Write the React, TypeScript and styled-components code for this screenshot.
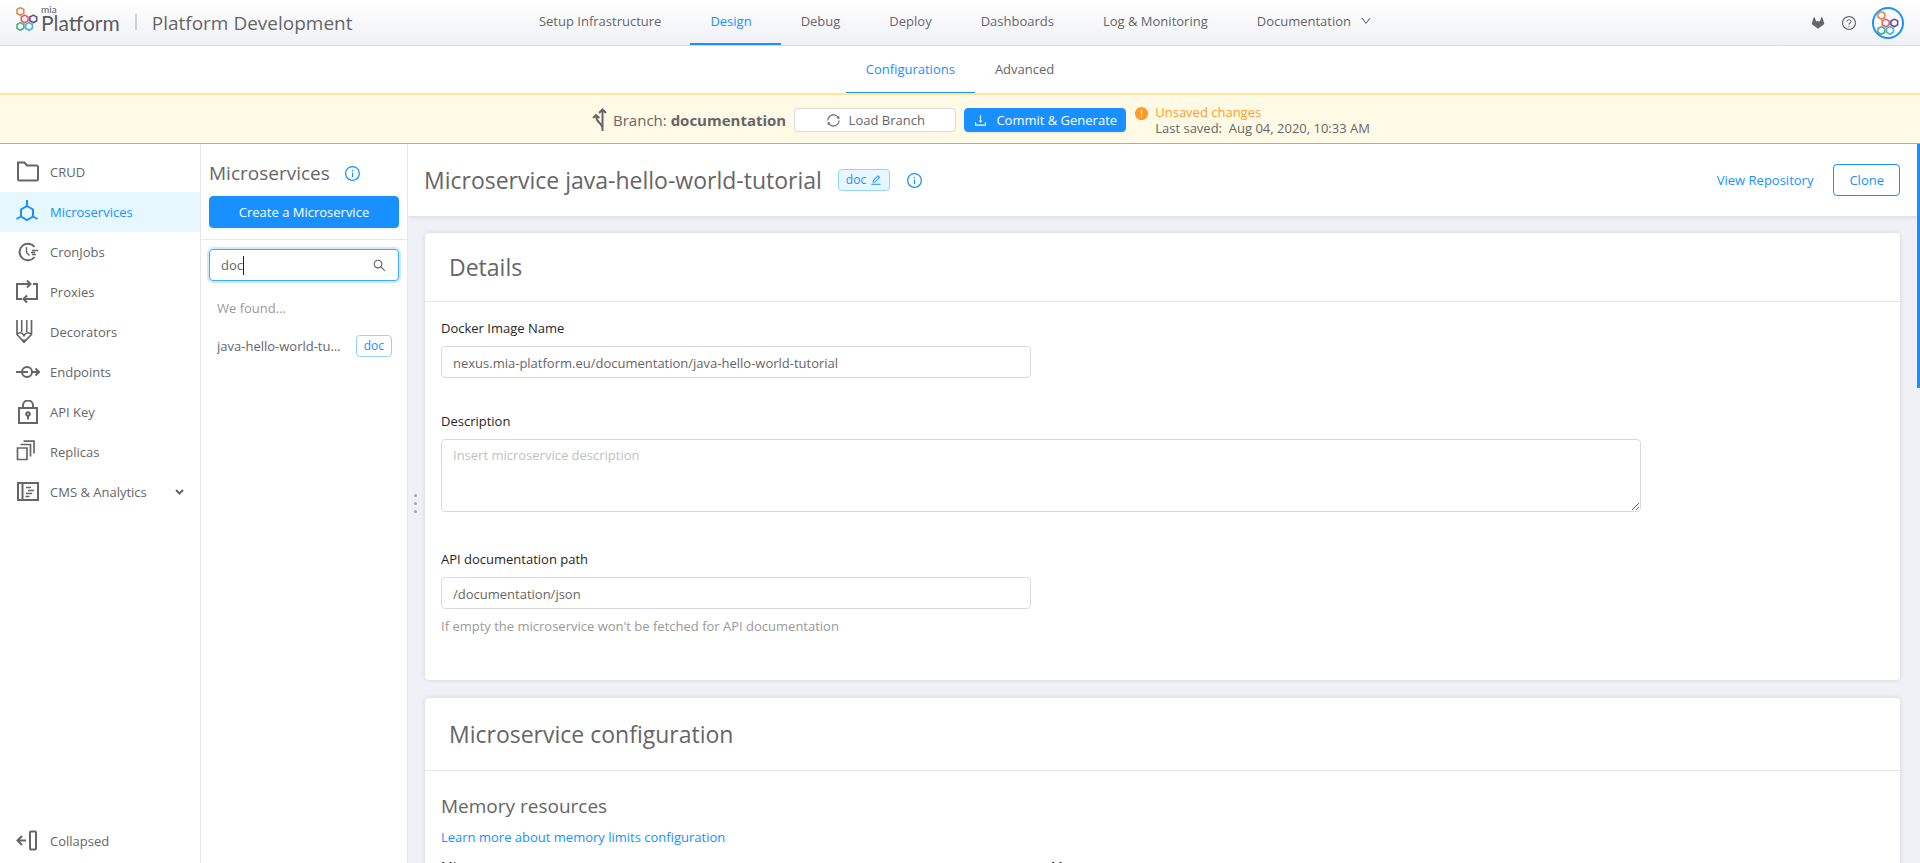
import React, { useState } from "react";
import styled, { createGlobalStyle, css } from "styled-components";
import {
  AiFillExclamationCircle,
  AiFillGitlab,
  AiOutlineDown,
  AiOutlineDownload,
  AiOutlineEdit,
  AiOutlineInfoCircle,
  AiOutlineQuestionCircle,
  AiOutlineSearch,
  AiOutlineSync,
} from "react-icons/ai";

const BLUE = "#1890ff";
const TEXT = "#666666";
const LINE = "#e8e8e8";
const ORANGE = "#ff9a2e";
const CANVAS = "#f0f1f6";

const GlobalStyle = createGlobalStyle`
  *, *::before, *::after { box-sizing: border-box; }
  body {
    margin: 0;
    font-family: "Open Sans", "Noto Sans", sans-serif;
    font-size: 13px;
    line-height: 22px;
    color: ${TEXT};
    background: #fff;
  }
  button, input, textarea { font: inherit; color: inherit; }
  a { color: ${BLUE}; text-decoration: none; }
  h1, h2, h3, p, ul { margin: 0; padding: 0; font-weight: 400; list-style: none; }
`;

const Page = styled.div`
  height: 100vh;
  display: flex;
  flex-direction: column;
  overflow: hidden;
`;

/* ---------- top bar ---------- */

const TopBar = styled.header`
  flex: none;
  height: 46px;
  display: grid;
  grid-template-columns: 1fr auto 1fr;
  background: linear-gradient(#fff, ${CANVAS});
  border-bottom: 1px solid #d9d9dc;
`;

const Brand = styled.div`
  display: flex;
  align-items: center;
  padding: 0 0 8px 16px;
`;

const BrandName = styled.span`
  display: flex;
  flex-direction: column;
  margin-left: 3px;
  font-family: Lato, sans-serif;
  font-size: 21px;
  line-height: 20px;
  color: #5b5c5e;

  small {
    font-size: 10px;
    line-height: 8px;
  }
`;

const Divider = styled.span`
  width: 2px;
  height: 16px;
  margin: 6px 15px 0;
  background: #d0d0d3;
`;

const ProjectName = styled.span`
  margin-top: 8px;
  font-size: 19px;
  line-height: 28px;
`;

const Nav = styled.nav`
  display: flex;
`;

const NavLink = styled.a<{ $active?: boolean }>`
  display: flex;
  align-items: center;
  gap: 9px;
  padding: 0 29px 2px 20px;
  color: ${(p) => (p.$active ? BLUE : TEXT)};
  border-bottom: 2px solid ${(p) => (p.$active ? BLUE : "transparent")};
`;

const TopActions = styled.div`
  display: flex;
  align-items: center;
  justify-content: flex-end;
  gap: 15px;
  padding-right: 16px;
`;

const IconButton = styled.button`
  display: flex;
  padding: 0;
  border: 0;
  background: none;
`;

const Avatar = styled.button`
  display: flex;
  align-items: center;
  justify-content: center;
  width: 32px;
  height: 32px;
  padding: 0;
  border: 2px solid ${BLUE};
  border-radius: 50%;
  background: #fff;
`;

/* ---------- section tabs ---------- */

const SubNav = styled.nav`
  flex: none;
  height: 48px;
  display: flex;
  justify-content: center;
  border-bottom: 1px solid ${LINE};
`;

const SubLink = styled.a<{ $active?: boolean }>`
  display: flex;
  align-items: center;
  padding: 0 20px;
  color: ${(p) => (p.$active ? BLUE : TEXT)};
  border-bottom: 1px solid ${(p) => (p.$active ? BLUE : "transparent")};
`;

/* ---------- branch banner ---------- */

const Banner = styled.section`
  flex: none;
  height: 50px;
  display: flex;
  align-items: center;
  justify-content: center;
  gap: 8px;
  padding: 2px 0 0 42px;
  background: #fffae6;
  border-top: 1px solid #ffe58f;
  border-bottom: 1px solid ${ORANGE};
`;

const BranchLabel = styled.div`
  display: flex;
  align-items: center;
  gap: 6px;
  font-size: 15px;
`;

const Button = styled.button<{ $primary?: boolean; $outline?: boolean; $small?: boolean }>`
  display: flex;
  align-items: center;
  justify-content: center;
  gap: 8px;
  height: ${(p) => (p.$small ? 24 : 32)}px;
  padding: 0 15px;
  border: 1px solid #d9d9d9;
  border-radius: 4px;
  background: #fff;
  ${(p) => p.$small && css`width: 162px; padding: 0;`}
  ${(p) =>
    p.$primary &&
    css`
      color: #fff;
      background: ${BLUE};
      border-color: ${BLUE};
      box-shadow: 0 2px 0 rgba(0, 0, 0, 0.04);
    `}
  ${(p) =>
    p.$outline &&
    css`
      color: ${BLUE};
      border-color: ${BLUE};
    `}
`;

const SaveState = styled.div`
  display: flex;
  gap: 6px;
  line-height: 16px;

  svg { margin-top: 2px; color: ${ORANGE}; }
  strong { display: block; font-weight: 400; color: ${ORANGE}; }
  span { white-space: pre; }
`;

/* ---------- body ---------- */

const Body = styled.div`
  flex: 1;
  min-height: 0;
  display: flex;
`;

const Sidebar = styled.nav`
  flex: none;
  width: 201px;
  display: flex;
  flex-direction: column;
  justify-content: space-between;
  padding: 8px 0 2px;
  border-right: 1px solid ${LINE};
`;

const SideItem = styled.a<{ $active?: boolean }>`
  display: flex;
  align-items: center;
  gap: 10px;
  height: 40px;
  padding: 0 16px;
  color: ${(p) => (p.$active ? BLUE : TEXT)};
  background: ${(p) => (p.$active ? "#e6f7ff" : "transparent")};

  > span { flex: 1; }
`;

const Panel = styled.aside`
  flex: none;
  width: 207px;
  border-right: 1px solid ${LINE};
`;

const PanelHead = styled.div`
  display: flex;
  flex-direction: column;
  gap: 8px;
  padding: 14px 8px 11px;
  border-bottom: 1px solid ${LINE};
`;

const PanelTitle = styled.div`
  display: flex;
  align-items: center;
  gap: 14px;

  h2 { font-size: 19px; line-height: 30px; }
  svg { color: ${BLUE}; }
`;

const SearchBox = styled.label`
  position: relative;
  display: flex;
  align-items: center;
  height: 32px;
  margin: 9px 8px 0;
  padding: 0 11px;
  border: 1px solid #40a9ff;
  border-radius: 4px;
  box-shadow: 0 0 0 2px rgba(24, 144, 255, 0.2);

  input {
    flex: 1;
    min-width: 0;
    padding: 0;
    border: 0;
    outline: 0;
    background: none;
    caret-color: transparent;
  }
`;

const Caret = styled.i`
  position: absolute;
  left: 33px;
  top: 6px;
  width: 1px;
  height: 19px;
  background: #222;
`;

const ResultsTitle = styled.p`
  padding: 16px 16px 0;
  color: #999;
`;

const Result = styled.a`
  display: flex;
  align-items: center;
  gap: 12px;
  margin: 16px 15px 0 16px;
  color: ${TEXT};

  > span:first-child {
    flex: 1;
    min-width: 0;
    overflow: hidden;
    text-overflow: ellipsis;
    white-space: nowrap;
  }
`;

const tag = css`
  display: flex;
  align-items: center;
  gap: 4px;
  height: 22px;
  padding: 0 7px;
  border: 1px solid #91d5ff;
  border-radius: 4px;
  font-size: 12px;
  line-height: 20px;
  color: ${BLUE};
`;

const Tag = styled.span`
  ${tag}
`;

const TagButton = styled.button`
  ${tag}
  background: #e6f7ff;
`;

const Main = styled.main`
  position: relative;
  flex: 1;
  min-width: 0;
  overflow: hidden;
  background: ${CANVAS};
`;

const MainHead = styled.div`
  display: flex;
  align-items: center;
  gap: 16px;
  height: 72px;
  padding: 0 20px 0 16px;
  background: #fff;
  box-shadow: 0 1px 4px rgba(0, 0, 0, 0.1);

  h1 { font-size: 23px; line-height: 32px; }
  > svg { color: ${BLUE}; }
  > a { margin-left: auto; margin-right: 4px; }
`;

const Cards = styled.div`
  display: flex;
  flex-direction: column;
  gap: 18px;
  padding: 17px 20px 17px 17px;
`;

const Card = styled.section`
  background: #fff;
  border-radius: 4px;
  box-shadow: 0 0 5px rgba(0, 0, 0, 0.12);
`;

const CardTitle = styled.h2<{ $tall?: boolean }>`
  padding: ${(p) => (p.$tall ? 20 : 18)}px 24px;
  font-size: 23px;
  line-height: 32px;
  border-bottom: 1px solid ${LINE};
`;

const CardBody = styled.div`
  padding: 15px 16px 11px;
`;

const FieldGrid = styled.div`
  display: grid;
  grid-template-columns: 1fr 1fr;
  column-gap: 20px;
  max-width: 1200px;
`;

const Field = styled.div<{ $wide?: boolean }>`
  grid-column: ${(p) => (p.$wide ? "1 / -1" : "1")};
  display: flex;
  flex-direction: column;
  margin-bottom: 32px;

  label { margin-bottom: 7px; color: #262626; }
  small { margin-top: 6px; font-size: 13px; color: #999; }
`;

const control = css`
  border: 1px solid #d9d9d9;
  border-radius: 4px;
  background: #fff;
  outline: 0;
`;

const TextInput = styled.input`
  ${control}
  height: 32px;
  padding: 5px 11px 3px;
`;

const TextArea = styled.textarea`
  ${control}
  height: 73px;
  margin-bottom: 4px;
  padding: 4px 11px;
  resize: vertical;

  &::placeholder { color: #bfbfbf; }
`;

const SubTitle = styled.h3`
  margin: 5px 0;
  font-size: 19px;
  line-height: 30px;
`;

const LimitGrid = styled(FieldGrid)`
  margin-top: 7px;

  ${Field} { grid-column: auto; }
`;

const Grip = styled.div`
  position: absolute;
  left: 6px;
  top: 0;
  bottom: 0;
  display: flex;
  flex-direction: column;
  justify-content: center;
  gap: 5px;

  i {
    width: 3px;
    height: 3px;
    border-radius: 50%;
    background: #a6a6a6;
  }
`;

const ScrollThumb = styled.div`
  position: absolute;
  top: 0;
  right: 0;
  width: 3px;
  height: 34%;
  background: ${BLUE};
`;

/* ---------- drawings ---------- */

const HEXES: [number, number, string][] = [
  [4.4, 4.4, "#e8884a"],
  [8.7, 11.9, "#e4606c"],
  [17.3, 11.9, "#6a4c93"],
  [4.4, 19.4, "#4fae7b"],
  [13, 19.4, "#45b5da"],
];

const HexLogo = () => (
  <svg width="22" height="24" viewBox="0 0 22 24" fill="none" strokeWidth="1.6" aria-hidden="true">
    {HEXES.map(([x, y, color]) => (
      <path
        key={color}
        stroke={color}
        strokeLinejoin="round"
        d={`M${x} ${y - 3.8}l3.400 1.900v3.800l-3.400 1.900-3.400-1.900v-3.800z`}
      />
    ))}
  </svg>
);

const Glyph = ({ children }: { children: React.ReactNode }) => (
  <svg width="24" height="24" viewBox="0 0 24 24" fill="none" stroke="currentColor" strokeWidth="2" aria-hidden="true">
    {children}
  </svg>
);

const BranchIcon = () => (
  <svg width="15" height="24" viewBox="0 0 15 24" fill="none" stroke="currentColor" strokeWidth="2" aria-hidden="true">
    <path d="M10.500 23V2M7 5l3.500-3.500L14 5M10 19C9 14 4 15 4 7M1 10l3-3 3.500 3" />
  </svg>
);

const ICONS: Record<string, React.ReactNode> = {
  crud: <path d="M2 2.500h6.500l2.500 3h9.500a1.500 1.500 0 0 1 1.500 1.500v12a1.500 1.500 0 0 1-1.500 1.500h-17A1.500 1.500 0 0 1 2 19z" />,
  services: (
    <path d="M11 0v6M11 6l6 3.500v7L11 20l-6-3.500v-7zM5 16.500L.5 19M17 16.500l4.500 2.500" />
  ),
  cron: (
    <>
      <path d="M18.500 7A8.300 8.300 0 1 0 18.500 17" />
      <path d="M10.500 7v5.500l3 3M16 10.500h6M15 12.500h4M16 14.500h4" strokeWidth="1.400" />
    </>
  ),
  proxies: (
    <path d="M6 19H1V4h13M17 4h4v15H8M11 .5L14.500 4 11 7.500M11 15.500l-3.500 3.500 3.500 3.500" />
  ),
  decorators: (
    <>
      <path d="M1 0v14.500L8 22l7.500-7.500V0M1 14.500c2-2.500 5-2.500 7 1 2-3.500 5-3.500 7.500-1" strokeWidth="1.700" />
      <path d="M5.700 0v12M10.800 0v12" strokeWidth="1.500" />
      <path d="M6 20l2 3 2-3z" fill="currentColor" strokeWidth="1" />
    </>
  ),
  endpoints: (
    <>
      <circle cx="11" cy="12" r="5" />
      <path d="M0 12h12M16 12h7M19.500 8.500L23 12l-3.500 3.500" />
    </>
  ),
  key: (
    <>
      <path d="M3 8h18v15H3zM7 8V5.500a5 5 0 0 1 10 0V8" />
      <circle cx="12" cy="14" r="1.800" />
      <path d="M12 15.500v4" />
    </>
  ),
  replicas: (
    <path d="M1.500 8h9.500v11.500H1.500zM4.500 4.500h10v12M7.500 1.200H18V13.500" strokeWidth="1.700" />
  ),
  cms: (
    <>
      <path d="M2 3h20v17H2zM6.500 3v17" />
      <path d="M10 7.500h5M12 10.500h6M10 13.500h6M9.500 16.500h4" strokeWidth="1.500" />
    </>
  ),
  collapse: (
    <>
      <path d="M10 11.500H2M6 7l-4.500 4.500L6 16" />
      <rect x="14" y="2.500" width="6" height="18" rx="1" />
    </>
  ),
};

const TOP_LINKS = ["Setup Infrastructure", "Design", "Debug", "Deploy", "Dashboards", "Log & Monitoring"];

const SIDE_LINKS = [
  { icon: "crud", label: "CRUD" },
  { icon: "services", label: "Microservices" },
  { icon: "cron", label: "CronJobs" },
  { icon: "proxies", label: "Proxies" },
  { icon: "decorators", label: "Decorators" },
  { icon: "endpoints", label: "Endpoints" },
  { icon: "key", label: "API Key" },
  { icon: "replicas", label: "Replicas" },
  { icon: "cms", label: "CMS & Analytics" },
];

export default function App() {
  const [search, setSearch] = useState("doc");
  const [image, setImage] = useState("nexus.mia-platform.eu/documentation/java-hello-world-tutorial");
  const [docPath, setDocPath] = useState("/documentation/json");

  return (
    <>
      <GlobalStyle />
      <Page>
        <TopBar>
          <Brand>
            <HexLogo />
            <BrandName>
              <small>mia</small>
              Platform
            </BrandName>
            <Divider />
            <ProjectName>Platform Development</ProjectName>
          </Brand>
          <Nav>
            {TOP_LINKS.map((label) => (
              <NavLink key={label} href="#" $active={label === "Design"}>
                {label}
              </NavLink>
            ))}
            <NavLink href="#">
              Documentation <AiOutlineDown size={12} />
            </NavLink>
          </Nav>
          <TopActions>
            <IconButton aria-label="GitLab"><AiFillGitlab size={16} /></IconButton>
            <IconButton aria-label="Help"><AiOutlineQuestionCircle size={16} /></IconButton>
            <Avatar aria-label="Account"><HexLogo /></Avatar>
          </TopActions>
        </TopBar>

        <SubNav>
          <SubLink href="#" $active>Configurations</SubLink>
          <SubLink href="#">Advanced</SubLink>
        </SubNav>

        <Banner>
          <BranchLabel>
            <BranchIcon />
            <span>Branch: <b>documentation</b></span>
          </BranchLabel>
          <Button $small><AiOutlineSync size={15} />Load Branch</Button>
          <Button $small $primary><AiOutlineDownload size={15} />Commit &amp; Generate</Button>
          <SaveState>
            <AiFillExclamationCircle size={15} />
            <div>
              <strong>Unsaved changes</strong>
              <span>Last saved:  Aug 04, 2020, 10:33 AM</span>
            </div>
          </SaveState>
        </Banner>

        <Body>
          <Sidebar>
            <div>
              {SIDE_LINKS.map(({ icon, label }) => (
                <SideItem key={icon} href="#" $active={icon === "services"}>
                  <Glyph>{ICONS[icon]}</Glyph>
                  <span>{label}</span>
                  {icon === "cms" && (
                    <svg width="9" height="6" viewBox="0 0 9 6" fill="none" stroke="currentColor" strokeWidth="2" aria-hidden="true">
                      <path d="M1 1l3.500 3.500L8 1" />
                    </svg>
                  )}
                </SideItem>
              ))}
            </div>
            <SideItem href="#">
              <Glyph>{ICONS.collapse}</Glyph>
              <span>Collapsed</span>
            </SideItem>
          </Sidebar>

          <Panel>
            <PanelHead>
              <PanelTitle>
                <h2>Microservices</h2>
                <AiOutlineInfoCircle size={17} />
              </PanelTitle>
              <Button $primary>Create a Microservice</Button>
            </PanelHead>
            <SearchBox>
              <input aria-label="Search" value={search} onChange={(e) => setSearch(e.target.value)} />
              <Caret />
              <AiOutlineSearch size={15} />
            </SearchBox>
            <ResultsTitle>We found...</ResultsTitle>
            <Result href="#">
              <span>java-hello-world-tutorial</span>
              <Tag>doc</Tag>
            </Result>
          </Panel>

          <Main>
            <MainHead>
              <h1>Microservice java-hello-world-tutorial</h1>
              <TagButton>doc <AiOutlineEdit size={12} /></TagButton>
              <AiOutlineInfoCircle size={17} />
              <a href="#">View Repository</a>
              <Button $outline>Clone</Button>
            </MainHead>
            <Cards>
              <Card>
                <CardTitle>Details</CardTitle>
                <CardBody>
                  <FieldGrid>
                    <Field>
                      <label htmlFor="image">Docker Image Name</label>
                      <TextInput id="image" value={image} onChange={(e) => setImage(e.target.value)} />
                    </Field>
                    <Field $wide>
                      <label htmlFor="description">Description</label>
                      <TextArea id="description" placeholder="Insert microservice description" />
                    </Field>
                    <Field>
                      <label htmlFor="docpath">API documentation path</label>
                      <TextInput id="docpath" value={docPath} onChange={(e) => setDocPath(e.target.value)} />
                      <small>If empty the microservice won't be fetched for API documentation</small>
                    </Field>
                  </FieldGrid>
                </CardBody>
              </Card>
              <Card>
                <CardTitle $tall>Microservice configuration</CardTitle>
                <CardBody>
                  <SubTitle>Memory resources</SubTitle>
                  <a href="#">Learn more about memory limits configuration</a>
                  <LimitGrid>
                    <Field>
                      <label htmlFor="min-memory">Min</label>
                      <TextInput id="min-memory" />
                    </Field>
                    <Field>
                      <label htmlFor="max-memory">Max</label>
                      <TextInput id="max-memory" />
                    </Field>
                  </LimitGrid>
                </CardBody>
              </Card>
            </Cards>
            <Grip><i /><i /><i /></Grip>
            <ScrollThumb />
          </Main>
        </Body>
      </Page>
    </>
  );
}
